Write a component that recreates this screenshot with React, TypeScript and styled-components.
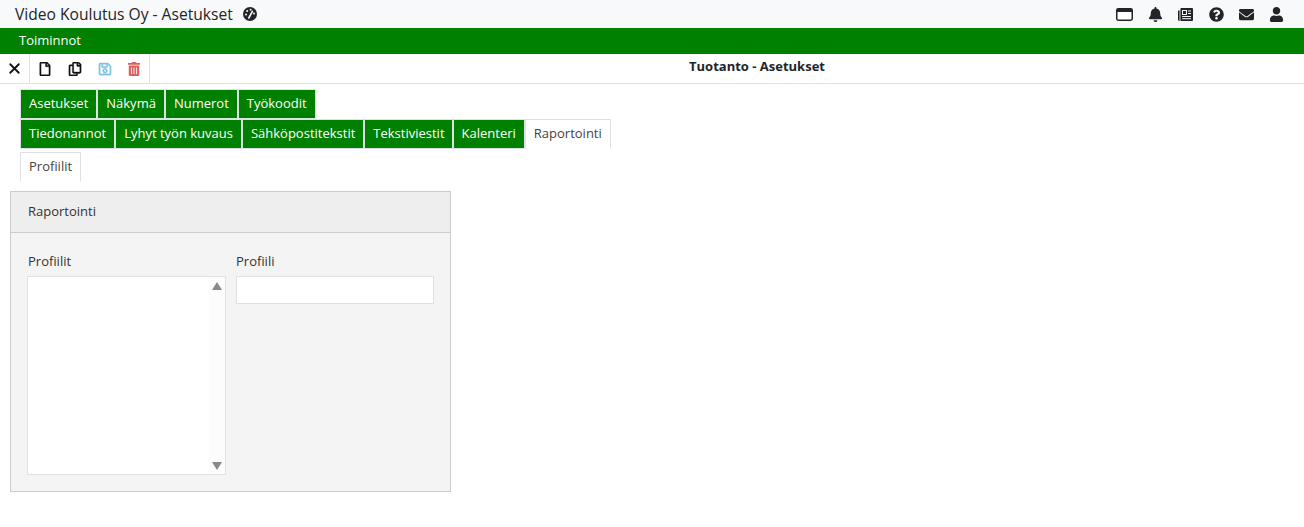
import React from "react";
import styled, { createGlobalStyle } from "styled-components";
import { FaBell, FaQuestionCircle, FaEnvelope, FaUser, FaRegFile, FaRegCopy, FaRegSave, FaTrashAlt } from "react-icons/fa";
import { X } from "lucide-react";

const Global = createGlobalStyle`
  html, body { margin: 0; padding: 0; background: #fff; }
  body { font-family: "Open Sans", "Noto Sans", sans-serif; font-size: 13px; color: #333; }
  * { box-sizing: border-box; }
`;
const TopBar = styled.header`
  height: 28px; background: #f8f9fa; display: flex; align-items: center; justify-content: space-between;
  padding: 0 20px 0 15px; color: #212529;
`;
const Brand = styled.div`display: flex; align-items: center; gap: 10px; font-size: 15.6px; line-height: 28px;`;
const BrandIcon = styled.span`display: flex; color: #212529;`;
const TopIcons = styled.nav`display: flex; align-items: center; gap: 15.2px;`;
const TopIcon = styled.span`display: flex; justify-content: center; font-size: 15px; color: #212529;`;
const MenuBar = styled.div`height: 26px; background: #008000; color: #fff; padding-left: 19px; line-height: 25px; font-size: 13px;`;
const ToolBar = styled.div`height: 30px; display: flex; border-bottom: 1px solid #dee2e6;`;
const ToolGroup = styled.div`display: flex; align-items: center; height: 29px; border-right: 1px solid #dee2e6;`;
const ToolCell = styled.span`
  width: ${p => p.$last ? 29 : 30}px; display: flex; justify-content: center; font-size: 14px;
  color: ${p => p.$color || "#111"};
  padding-right: ${p => p.$last ? 2 : 1}px;
  svg path { stroke: currentColor; stroke-width: ${p => p.$bold ? 14 : 0}; }
`;
const CloseCell = styled.span`width: 29px; display: flex; justify-content: center; color: #111;`;
const Title = styled.div`flex: 1; text-align: center; font-weight: 700; font-size: 13px; line-height: 25px; padding-left: 60px; color: #212529;`;
const TabRows = styled.div`padding: 5px 0 0 20px;`;
const TabRow = styled.div`display: flex; margin-bottom: ${p => p.$gap || 0}px;`;
const Tab = styled.div`
  height: 30px; padding: 0 ${p => p.$trim ? 7 : 8}px 0 8px; line-height: 26px; font-size: 13px; border: 1px solid #dee2e6;
  background: ${p => p.$active ? "#fff" : "#008000"}; color: ${p => p.$active ? "#444" : "#fff"};
  ${p => p.$active ? "border-bottom-color: transparent;" : ""}
`;
const Panel = styled.section`
  margin: 9px 0 0 10px; width: 441px; height: 301px; border: 1px solid #ccc; background: #f4f4f4;
`;
const PanelHead = styled.div`height: 41px; background: #eee; border-bottom: 1px solid #ccc; padding-left: 17px; line-height: 38px; font-size: 13px;`;
const PanelBody = styled.div`display: flex; gap: 10px; padding: 19px 0 0 16px;`;
const Field = styled.div`width: ${p => p.$w}px;`;
const Label = styled.div`font-size: 13px; line-height: 18px; margin-bottom: 6px; color: #333; padding-left: ${p => p.$inset || 0}px;`;
const ListBox = styled.div`height: 199px; background: #fff; border: 1px solid #dee2e6; display: flex; justify-content: flex-end;`;
const Track = styled.div`
  width: 16px; background: #fcfcfc; display: flex; flex-direction: column; justify-content: space-between; align-items: center; padding: 5px 0 4px;
`;
const Arrow = styled.span`
  width: 0; height: 0; border-left: 5px solid transparent; border-right: 5px solid transparent;
  ${p => p.$up ? "border-bottom: 8px solid #888;" : "border-top: 8px solid #888;"}
`;
const Input = styled.div`height: 28px; background: #fff; border: 1px solid #dee2e6;`;

const GaugeIcon = () => (
  <svg width="14" height="14" viewBox="0 0 14 14">
    <circle cx="7" cy="7" r="7" fill="#212529" />
    <circle cx="3" cy="7.5" r="1" fill="#f8f9fa" />
    <circle cx="4.2" cy="4" r="1" fill="#f8f9fa" />
    <circle cx="7.6" cy="2.8" r="1" fill="#f8f9fa" />
    <circle cx="11" cy="6.5" r="1" fill="#f8f9fa" />
    <path d="M5.8 11 L9.4 4.4" stroke="#f8f9fa" strokeWidth="1.6" strokeLinecap="round" />
  </svg>
);
const WindowIcon = () => (
  <svg width="17" height="13" viewBox="0 0 17 13">
    <rect x="0.75" y="0.75" width="15.5" height="11.5" rx="1.4" fill="#fff" stroke="#212529" strokeWidth="1.5" />
    <rect x="1" y="1" width="15" height="3" fill="#212529" />
  </svg>
);
const NewsIcon = () => (
  <svg width="15" height="13" viewBox="0 0 15 13">
    <rect x="2.4" y="0" width="12.6" height="13" rx="1" fill="#212529" />
    <path d="M0 2.5h1.6v9.5a.8.8 0 0 0 .8.8H1a1 1 0 0 1-1-1z" fill="#212529" />
    <rect x="4.5" y="2.5" width="4" height="4" fill="none" stroke="#f8f9fa" strokeWidth="1" />
    <path d="M10 3h3M10 5.5h3M4.2 8.5h8.8M4.2 10.7h8.8" stroke="#f8f9fa" strokeWidth="1" />
  </svg>
);

const row1 = ["Asetukset", "Näkymä", "Numerot", "Työkoodit"];
const row2 = ["Tiedonannot", "Lyhyt työn kuvaus", "Sähköpostitekstit", "Tekstiviestit", "Kalenteri"];

export default function App() {
  return (
    <>
      <Global />
      <TopBar>
        <Brand>Video Koulutus Oy - Asetukset <BrandIcon><GaugeIcon /></BrandIcon></Brand>
        <TopIcons>
          <TopIcon><WindowIcon /></TopIcon>
          <TopIcon><FaBell /></TopIcon>
          <TopIcon><NewsIcon /></TopIcon>
          <TopIcon><FaQuestionCircle /></TopIcon>
          <TopIcon><FaEnvelope /></TopIcon>
          <TopIcon><FaUser /></TopIcon>
        </TopIcons>
      </TopBar>
      <MenuBar>Toiminnot</MenuBar>
      <ToolBar>
        <ToolGroup><CloseCell><X size={17} strokeWidth={2.6} /></CloseCell></ToolGroup>
        <ToolGroup>
          <ToolCell $bold><FaRegFile /></ToolCell>
          <ToolCell $bold><FaRegCopy /></ToolCell>
          <ToolCell $bold $color="#7cc4e0"><FaRegSave /></ToolCell>
          <ToolCell $last $color="#d9605c"><FaTrashAlt /></ToolCell>
        </ToolGroup>
        <Title>Tuotanto - Asetukset</Title>
      </ToolBar>
      <TabRows>
        <TabRow>{row1.map(t => <Tab key={t}>{t}</Tab>)}</TabRow>
        <TabRow $gap={3}>
          {row2.map(t => <Tab key={t} $trim={t === "Tekstiviestit"}>{t}</Tab>)}
          <Tab $active>Raportointi</Tab>
        </TabRow>
        <TabRow><Tab $active>Profiilit</Tab></TabRow>
      </TabRows>
      <Panel>
        <PanelHead>Raportointi</PanelHead>
        <PanelBody>
          <Field $w={199}>
            <Label $inset={1}>Profiilit</Label>
            <ListBox><Track><Arrow $up /><Arrow /></Track></ListBox>
          </Field>
          <Field $w={198}>
            <Label>Profiili</Label>
            <Input />
          </Field>
        </PanelBody>
      </Panel>
    </>
  );
}
